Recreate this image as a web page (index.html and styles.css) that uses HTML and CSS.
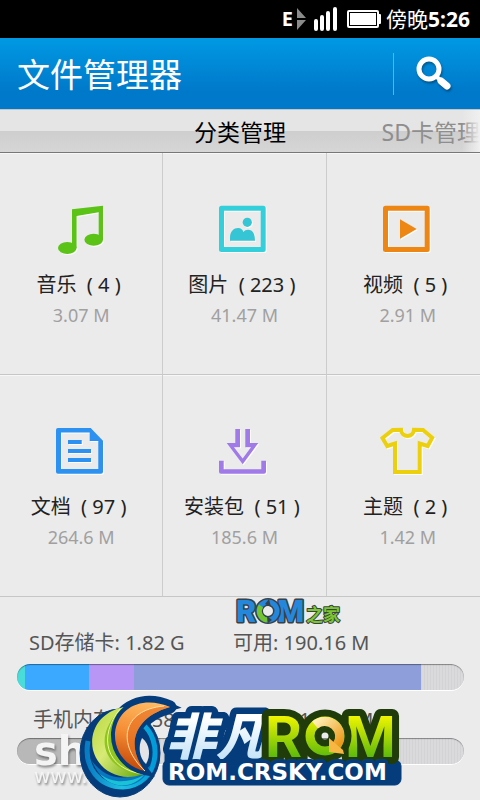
FILE: index.html
```html
<!DOCTYPE html>
<html lang="zh-CN">
<head>
<meta charset="utf-8">
<meta name="viewport" content="width=device-width, initial-scale=1">
<title>文件管理器</title>
<link rel="stylesheet" href="styles.css">
</head>
<body>
<div class="status">
  <span class="network">E</span>
  <svg class="arrows" width="10" height="24" viewBox="0 0 10 24" aria-hidden="true"><path d="M0 1L9 11H0ZM0 13H9L0 23Z" fill="#8a8a8a"/></svg>
  <svg class="signal" width="26" height="26" viewBox="0 0 26 26" aria-hidden="true"><path d="M3 15v8M9 11v12M15 7v16M22 3v20" stroke="#fff" stroke-width="4" stroke-linecap="round"/></svg>
  <svg class="battery" width="34" height="18" viewBox="0 0 34 18" aria-hidden="true"><rect width="32" height="18" rx="2" fill="#fff"/><rect x="31" y="4" width="3" height="10" rx="1" fill="#fff"/><rect x="2.500" y="2.500" width="27" height="13" fill="#fff" stroke="#000"/></svg>
  <span class="clock">傍晚<b>5:26</b></span>
</div>

<header class="header">
  <h1>文件管理器</h1>
  <button class="search" type="button" aria-label="搜索">
    <svg width="40" height="40" viewBox="0 0 40 40" aria-hidden="true"><circle cx="15" cy="15" r="10" fill="none" stroke="#fff" stroke-width="5"/><path d="M22 22l4 4" stroke="#fff" stroke-width="4"/><path d="M27 27l6 5" stroke="#fff" stroke-width="7" stroke-linecap="round"/></svg>
  </button>
</header>

<nav class="tabs">
  <button class="tab tab-current" type="button">分类管理</button>
  <button class="tab tab-next" type="button">SD卡管理</button>
</nav>

<main class="categories">
  <a class="category" href="#music">
    <svg class="icon" viewBox="0 0 56 52" aria-hidden="true"><g fill="#5bc216"><path d="M19 5.300L50 1.700V36H45.700V8.300L23.600 12V44H19Z"/><ellipse cx="14.300" cy="44" rx="9.300" ry="6"/><ellipse cx="40.700" cy="35.700" rx="9.300" ry="6"/></g></svg>
    <span class="name">音乐  ( 4 ) </span><span class="size">3.07 M</span>
  </a>
  <a class="category" href="#pictures">
    <svg class="icon" viewBox="0 0 56 52" aria-hidden="true"><rect x="5.500" y="4.200" width="41.700" height="41.300" fill="none" stroke="#33d0dc" stroke-width="5" stroke-linejoin="round"/><g fill="#36c5d4"><circle cx="31.300" cy="18.300" r="4.600"/><path d="M14 36.700V34C14 27 18 24 22 24C25 24 27 26 27.500 28C28.500 26.500 30 25.800 32 25.800C37 25.800 39 30 39 36.700Z"/></g></svg>
    <span class="name">图片  ( 223 ) </span><span class="size">41.47 M</span>
  </a>
  <a class="category" href="#videos">
    <svg class="icon" viewBox="0 0 56 52" aria-hidden="true"><rect x="5.500" y="4.200" width="41.700" height="41.300" fill="none" stroke="#ee8613" stroke-width="5" stroke-linejoin="round"/><path d="M20 15.300L36.700 25L20 34.700Z" fill="#ee8613"/></svg>
    <span class="name">视频  ( 5 ) </span><span class="size">2.91 M</span>
  </a>
  <a class="category" href="#documents">
    <svg class="icon" viewBox="0 0 56 52" aria-hidden="true"><path fill="#2c91f0" fill-rule="evenodd" d="M5 2H37.700L50 14.700V45.700Q50 47.700 48 47.700H5Q3 47.700 3 45.700V4Q3 2 5 2ZM8 6.500V43H45.300V15H36.700V6.500Z"/><path fill="#2c91f0" d="M15 14H28.700V18H15ZM15 23H38V27H15ZM15 32H38V36H15Z"/></svg>
    <span class="name">文档  ( 97 ) </span><span class="size">264.6 M</span>
  </a>
  <a class="category" href="#packages">
    <svg class="icon" viewBox="0 0 56 52" aria-hidden="true"><g fill="#a07ae8"><path d="M19.300 3H24V21.300H18L26.700 32.500L35 21.300H29.300V3H34V17H42.300L26.700 38.300L10.700 17H19.300Z"/><path d="M3 34.700H7.700V43.200H45.300V34.700H50V45.700Q50 47.700 48 47.700H5Q3 47.700 3 45.700Z"/></g></svg>
    <span class="name">安装包  ( 51 ) </span><span class="size">185.6 M</span>
  </a>
  <a class="category" href="#themes">
    <svg class="icon" viewBox="0 0 56 52" aria-hidden="true"><path fill="none" stroke="#ecd00e" stroke-width="4" d="M12.700 4L21 3.700C21.500 12 33.500 12 34 3.700L43 4L52.200 11.700L47.700 20L39.700 17.500V46H15V17.500L7.300 20L2.500 12Z"/></svg>
    <span class="name">主题  ( 2 ) </span><span class="size">1.42 M</span>
  </a>
</main>

<section class="storage">
  <div class="volume">
    <p class="facts"><span>SD存储卡: 1.82 G</span><span>可用: 190.16 M</span></p>
    <div class="bar" role="img" aria-label="SD存储卡">
      <i class="teal" style="width:1.8%"></i><i class="blue" style="width:14.3%"></i><i class="violet" style="width:10.1%"></i><i class="indigo" style="width:64.2%"></i>
    </div>
  </div>
  <div class="volume">
    <p class="facts facts-phone"><span>手机内存: 12.58 M</span><span>可用: 112.51 M</span></p>
    <div class="bar" role="img" aria-label="手机内存">
      <i class="gray" style="width:32%"></i>
    </div>
  </div>

  <svg class="mark" width="110" height="32" viewBox="0 0 110 32">
    <g stroke="#394148" stroke-width="3" stroke-linejoin="round" paint-order="stroke">
      <text x="2" y="24" font-size="31" fill="#2587dc">R</text>
      <text x="43" y="24" font-size="31" fill="#2587dc">M</text>
      <text class="cjk" x="72" y="23" font-size="17" font-weight="700" stroke-width="2" fill="#7cc72b">之家</text>
    </g>
    <circle cx="34" cy="13" r="9" fill="none" stroke="#394148" stroke-width="8"/>
    <circle cx="34" cy="13" r="9" fill="none" stroke="#2587dc" stroke-width="5"/>
    <path d="M27 8A9 9 0 0 0 33 22" fill="none" stroke="#72c52b" stroke-width="5"/>
    <path d="M35 1l-4 5l6 3ZM34 25l-1-7l5 4Z" fill="#394148"/>
  </svg>

  <svg class="watermark" width="240" height="64" viewBox="0 0 240 64">
    <text x="1" y="33" font-size="40" font-weight="700">sh</text>
    <text x="1" y="51" font-size="20">www.</text>
  </svg>

  <svg class="logo" width="328" height="108" viewBox="78 692 328 108">
    <defs>
      <linearGradient id="ice" x1="0" y1="0" x2="0" y2="1"><stop offset=".3" stop-color="#fff"/><stop offset="1" stop-color="#b5dcf6"/></linearGradient>
      <linearGradient id="lime" gradientUnits="userSpaceOnUse" x1="0" y1="715" x2="0" y2="758"><stop stop-color="#f4f600"/><stop offset="1" stop-color="#58b80b"/></linearGradient>
      <linearGradient id="leaf" x1="0" y1="0" x2="1" y2="1"><stop stop-color="#b7d83a"/><stop offset=".45" stop-color="#d7ea76"/><stop offset="1" stop-color="#65a80b"/></linearGradient>
      <linearGradient id="flame" x1=".7" y1="0" x2=".5" y2="1"><stop stop-color="#ffba62"/><stop offset=".5" stop-color="#f58d35"/><stop offset="1" stop-color="#c64a08"/></linearGradient>
      <linearGradient id="sea" x1="0" y1="0" x2="1" y2="0"><stop stop-color="#087cc3"/><stop offset=".5" stop-color="#20bfe2"/><stop offset="1" stop-color="#009bd8"/></linearGradient>
      <linearGradient id="gold" x1="0" y1="0" x2="1" y2="1"><stop stop-color="#fff0b5"/><stop offset="1" stop-color="#ed9817"/></linearGradient>
    </defs>
    <g fill="#053d7c" stroke="#053d7c" stroke-linejoin="round">
      <ellipse cx="120" cy="753" rx="40" ry="44"/>
      <path stroke-width="13" d="M170 707C145 696 118 705 115 733C114 754 129 768 145 771C128 750 129 719 170 707Z"/>
      <rect x="163" y="760" width="238" height="25" rx="6"/>
      <path stroke-width="3" d="M166 750H262V770H166Z"/>
    </g>
    <path d="M142 724C163 739 160 785 123 787C100 787 83 768 88 741" fill="none" stroke="url(#sea)" stroke-width="5"/>
    <path d="M92 761C106 780 129 784 151 765C141 794 104 793 92 761Z" fill="#0877c0"/>
    <path d="M100 774C113 784 129 783 144 775C132 789 112 789 100 774Z" fill="#19c3d5"/>
    <path d="M124 707C99 712 89 732 93 750C98 770 120 783 143 774C107 767 98 735 124 707Z" fill="url(#leaf)"/>
    <path d="M124 707C105 732 109 765 143 774C105 773 89 735 124 707Z" fill="#8fc51c"/>
    <path d="M120 709C98 736 105 769 143 774" fill="none" stroke="#edf5a2"/>
    <path d="M170 707C145 696 118 705 115 733C114 754 129 768 145 771C128 750 129 719 170 707Z" fill="url(#flame)" stroke="#053d7c" stroke-width="8" paint-order="stroke"/>
    <path d="M164 706C121 710 117 745 145 771C128 750 129 719 170 707Z" fill="#e66f20" opacity=".65"/>
    <path d="M164 706C121 710 117 745 145 771" fill="none" stroke="#ffe0a5"/>
    <path d="M142 738C150 744 151 756 146 764C139 758 138 746 142 738Z" fill="#e2e4e8"/>
    <g stroke-linejoin="round" paint-order="stroke">
      <text class="cjk" x="166" y="755" font-size="50" font-weight="900" font-style="italic" fill="url(#ice)" stroke="#053d7c" stroke-width="13">非凡</text>
      <g font-size="58" font-weight="700" fill="url(#lime)" stroke="#203c0b" stroke-width="14">
        <text x="265" y="757">R</text>
        <text x="345" y="757">M</text>
      </g>
      <circle cx="325" cy="736" r="15" fill="none" stroke="#203c0b" stroke-width="23"/>
      <circle cx="325" cy="736" r="15" fill="none" stroke="url(#lime)" stroke-width="9"/>
      <path d="M315 725A15 15 0 0 1 337 745" fill="none" stroke="url(#gold)" stroke-width="9"/>
      <path d="M329 738L343 750L344 754L329 752Z" fill="#f8b642"/>
      <text class="wide" x="168" y="780" font-size="23" fill="#fff" stroke="#053d7c" stroke-width="8">ROM.CRSKY.COM</text>
    </g>
  </svg>
</section>
</body>
</html>
```

FILE: styles.css
```css
* {
  box-sizing: border-box;
}

body {
  margin: 0;
  min-height: 100vh;
  display: flex;
  flex-direction: column;
  overflow-x: hidden;
  background: #ebebeb;
  color: #222;
  font-family: "Noto Sans", "Noto Sans CJK SC", sans-serif;
  font-size: 20px;
}

button {
  padding: 0;
  border: 0;
  background: none;
  color: inherit;
  font: inherit;
}

.status {
  display: flex;
  align-items: center;
  height: 38px;
  padding-right: 10px;
  justify-content: flex-end;
  background: #000;
  color: #fff;
  line-height: 38px;
}

.network {
  font-weight: 700;
}

.clock {
  font-size: 21px;
}

.arrows {
  margin-left: 4px;
}

.signal {
  margin-left: 6px;
}

.battery {
  margin: 0 5px 0 8px;
}

.header {
  display: flex;
  align-items: center;
  justify-content: space-between;
  height: 71px;
  padding-left: 17px;
  background: linear-gradient(#0099e3, #0079ca 75%);
  color: #fff;
}

.header h1 {
  margin: 0;
  padding-top: 3px;
  font-size: 33px;
  font-weight: 400;
  line-height: 68px;
}

.search {
  width: 87px;
  height: 42px;
  padding-left: 20px;
  border-left: 1px solid #55b4e8;
  text-align: left;
}

.search svg {
  display: block;
  filter: drop-shadow(1px 2px 1px #0005);
}

.tabs {
  position: relative;
  display: grid;
  grid-template-columns: 1fr auto 1fr;
  height: 44px;
  border-top: 1px solid #c5c5c5;
  border-bottom: 1px solid #777;
  background: linear-gradient(#e5e5e5 50%, #cecece 50%, #d6d6d6);
}

.tabs::after {
  content: "";
  position: absolute;
  top: 0;
  right: 0;
  bottom: 0;
  width: 18px;
  background: linear-gradient(90deg, #ebebeb00, #f0f0f0);
}

.tab {
  font-size: 23px;
  line-height: 44px;
  white-space: nowrap;
}

.tab-current {
  grid-column: 2;
  color: #000;
}

.tab-next {
  justify-self: end;
  color: #8e8e8e;
}

.categories {
  display: grid;
  grid-template-columns: repeat(3, 1fr);
  width: calc(100% + 10px);
}

.category {
  display: flex;
  flex-direction: column;
  align-items: center;
  padding: 51px 0 44px;
  border-right: 1px solid #ccc;
  border-bottom: 1px solid #c6c6c6;
  box-shadow: inset 0 1px #f7f7f7;
  color: inherit;
  text-decoration: none;
}

.icon {
  width: 56px;
  height: 52px;
  filter: drop-shadow(1px 1px 0 #fff);
}

.name {
  margin-top: 14px;
  line-height: 30px;
  white-space: pre;
}

.size {
  color: #a0a0a0;
  font-size: 18px;
  line-height: 30px;
}

.storage {
  position: relative;
  flex: 1;
  padding: 32px 16px 32px 17px;
  color: #555;
}

.volume + .volume {
  margin-top: 16px;
}

.facts {
  display: grid;
  grid-template-columns: 204px 1fr;
  margin: 0;
  padding-left: 12px;
  line-height: 28px;
  white-space: nowrap;
}

.facts-phone {
  padding-left: 16px;
}

.bar {
  display: flex;
  height: 26px;
  margin-top: 7px;
  overflow: hidden;
  border-radius: 13px;
  background: repeating-linear-gradient(90deg, #dadadc 0 2px, #d3d3d5 2px 3px);
  box-shadow: 0 1px #fff;
  position: relative;
}

.facts-phone + .bar {
  margin-top: 4px;
}

.bar::after {
  content: "";
  position: absolute;
  inset: 0;
  border-radius: 13px;
  box-shadow: inset 0 1px 1px #0006;
}

.teal { background: #4adcd8; }
.blue { background: #3ba9ff; }
.violet { background: #b796f6; }
.indigo { background: #8e9eda; }
.gray { background: #b8b8b8; }

.mark,
.watermark,
.logo {
  position: absolute;
  overflow: visible;
  font-family: Roboto, sans-serif;
}

.mark {
  left: 234px;
  top: 1px;
  font-weight: 900;
}

.watermark {
  left: 33px;
  top: 135px;
  fill: #f4f4f4;
  font-family: "DejaVu Sans", sans-serif;
  filter: drop-shadow(1px 2px 1px #0006);
}

.logo {
  left: 78px;
  top: 95px;
}

.cjk {
  font-family: "Noto Sans CJK SC", sans-serif;
}

.wide {
  font-family: "DejaVu Sans", sans-serif;
  font-weight: 700;
}
```
